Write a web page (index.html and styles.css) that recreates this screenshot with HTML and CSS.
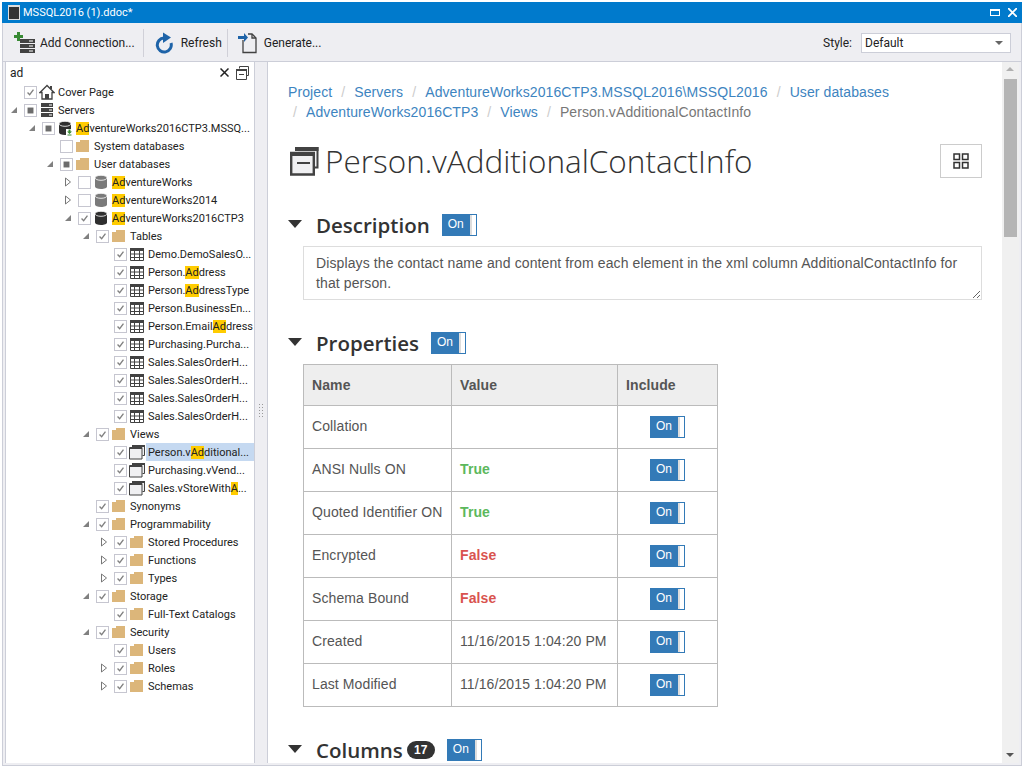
FILE: index.html
```html
<!DOCTYPE html>
<html>
  <head>
    <title>MSSQL2016 (1).ddoc*</title>
    <link rel="stylesheet" href="styles.css">
  </head>
  <body>
    <svg class="defs" width="0" height="0">
      <symbol id="cb-check" viewBox="0 0 13 13"><path d="M3 6.500 5.500 9 10 3.200" fill="none" stroke="#808080" stroke-width="1.600"/></symbol>
      <symbol id="cb-part" viewBox="0 0 13 13"><rect x="3" y="3" width="7" height="7" fill="#6c6c6c"/></symbol>
      <symbol id="exp-open" viewBox="0 0 8 8"><path d="M7 1V7H1Z" fill="#808080"/></symbol>
      <symbol id="exp-closed" viewBox="0 0 8 10"><path d="M1.500 1 6.500 5 1.500 9Z" fill="#fff" stroke="#777"/></symbol>
      <symbol id="folder" viewBox="0 0 16 16"><path d="M1 4h4V2h9v12H1Z" fill="#dcb67a"/></symbol>
      <symbol id="table" viewBox="0 0 16 16"><path d="M1.500 2.500h13v12h-13Z" fill="#fff" stroke="#424242"/><path d="M1 2h14v3H1Z" fill="#424242"/><path d="M1 8h14M1 11.500h14M5.500 5v10M10.500 5v10" stroke="#424242" fill="none"/></symbol>
      <symbol id="view" viewBox="0 0 16 16"><path d="M3.500 1.500h12v10h-2" fill="#f0f0f2" stroke="#424242"/><path d="M3 1h13v2H3Z" fill="#424242"/><path d="M.5 3.500h12.500v11.500H.5Z" fill="#f0f0f2" stroke="#424242"/><path d="M1 3h12v2H1Z" fill="#424242"/></symbol>
      <symbol id="db" viewBox="0 0 16 16"><path d="M2 4v8.500c0 1.500 2.500 2.500 6 2.500s6-1 6-2.500V4Z"/><ellipse cx="8" cy="3.800" rx="6" ry="2.500" stroke="#fff" stroke-width=".8"/></symbol>
      <symbol id="db-server" viewBox="0 0 16 16"><path d="M2 4v8.500c0 1.500 2.500 2.500 6 2.500s6-1 6-2.500V4Z" fill="#2f2f2f"/><ellipse cx="8" cy="3.800" rx="6" ry="2.500" fill="#2f2f2f" stroke="#fff" stroke-width=".8"/><path d="M9 9h7v7H9Z" fill="#fff"/><path d="M11.500 9.500h2v2H15L12.500 14 10 11.500h1.500ZM10.500 14.500h4v1h-4Z" fill="#388a34"/></symbol>
      <symbol id="servers" viewBox="0 0 16 16"><path d="M2 1h12v4H2ZM2 6h12v4H2ZM2 11h12v4H2Z" fill="#424242"/><path d="M10 3h3M10 8h3M10 13h3" stroke="#fff"/></symbol>
      <symbol id="home" viewBox="0 0 16 16"><path d="M8 1.500 1 8.500h2v6.500h10V8.500h2Z" fill="#fff" stroke="#424242" stroke-width="1.300"/><path d="M6 10h4v5H6Z" fill="#424242"/><path d="M11 2h2v3h-2Z" fill="#424242"/></symbol>
    </svg>

    <div class="window">
      <header class="titlebar">
        <span class="doc-icon"></span>
        <span class="title-text">MSSQL2016 (1).ddoc*</span>
        <span class="win-max"></span>
        <svg class="win-close" width="9" height="9" viewBox="0 0 9 9"><path d="M0 0 9 9M9 0 0 9" stroke="#fff" stroke-width="1.800"/></svg>
      </header>

      <div class="toolbar">
        <button class="tool tool-add">
          <svg width="22" height="22" viewBox="0 0 22 22">
            <path d="M6 7h15v4H6ZM6 12h15v4H6ZM6 17h15v4H6Z" fill="#424242"/>
            <path d="M15 9h4M15 14h4M15 19h4" stroke="#fff"/>
            <path d="M3 0h3v3h3v3H6v3H3V6H0V3h3Z" fill="#388a34"/>
          </svg>
          Add Connection...
        </button>
        <span class="tool-sep"></span>
        <button class="tool tool-refresh">
          <svg width="20" height="22" viewBox="0 0 20 22">
            <path d="M9 6A7 7 0 1 0 16 11" fill="none" stroke="#1e63a8" stroke-width="3"/>
            <path d="M8 .5V11L16 5.500Z" fill="#1e63a8"/>
          </svg>
          Refresh
        </button>
        <span class="tool-sep sep-second"></span>
        <button class="tool tool-gen">
          <svg width="20" height="22" viewBox="0 0 20 22">
            <path d="M5 8v12.500h13V6l-4-4h-4" fill="none" stroke="#424242" stroke-width="1.300"/>
            <path d="M14 2v4h4" fill="none" stroke="#424242" stroke-width="1.300"/>
            <path d="M0 4h6V1l4 4.500L6 10V7H0Z" fill="#1e63a8"/>
          </svg>
          Generate...
        </button>
        <span class="style-label">Style:</span>
        <div class="style-select">Default<span class="caret"></span></div>
      </div>

      <div class="main">
        <aside class="tree-panel">
          <div class="search">
            <span class="search-text">ad</span>
            <svg class="search-x" width="9" height="9" viewBox="0 0 9 9"><path d="M.5.500l8 8M8.500.500l-8 8" stroke="#222" stroke-width="1.500"/></svg>
            <svg width="13" height="14" viewBox="0 0 13 14"><path d="M3.500 2.500V.500h9v9h-2" fill="none" stroke="#424242"/><path d="M.5 3.500h10v10H.5Z" fill="#fff" stroke="#424242"/><path d="M0 3h11v2H0ZM3 8h5v1H3Z" fill="#424242"/></svg>
          </div>
          <div class="tree">
            <div class="row"><span class="exp"></span><span class="cb"><svg><use href="#cb-check"/></svg></span><svg class="ico"><use href="#home"/></svg><span class="label">Cover Page</span></div>
            <div class="row"><span class="exp"><svg class="open"><use href="#exp-open"/></svg></span><span class="cb"><svg><use href="#cb-part"/></svg></span><svg class="ico"><use href="#servers"/></svg><span class="label">Servers</span></div>
            <div class="row l1"><span class="exp"><svg class="open"><use href="#exp-open"/></svg></span><span class="cb"><svg><use href="#cb-part"/></svg></span><svg class="ico"><use href="#db-server"/></svg><span class="label"><mark>Ad</mark>ventureWorks2016CTP3.MSSQ...</span></div>
            <div class="row l2"><span class="exp"></span><span class="cb"></span><svg class="ico"><use href="#folder"/></svg><span class="label">System databases</span></div>
            <div class="row l2"><span class="exp"><svg class="open"><use href="#exp-open"/></svg></span><span class="cb"><svg><use href="#cb-part"/></svg></span><svg class="ico"><use href="#folder"/></svg><span class="label">User databases</span></div>
            <div class="row l3"><span class="exp"><svg class="closed"><use href="#exp-closed"/></svg></span><span class="cb"></span><svg class="ico db-gray"><use href="#db"/></svg><span class="label"><mark>Ad</mark>ventureWorks</span></div>
            <div class="row l3"><span class="exp"><svg class="closed"><use href="#exp-closed"/></svg></span><span class="cb"></span><svg class="ico db-gray"><use href="#db"/></svg><span class="label"><mark>Ad</mark>ventureWorks2014</span></div>
            <div class="row l3"><span class="exp"><svg class="open"><use href="#exp-open"/></svg></span><span class="cb"><svg><use href="#cb-check"/></svg></span><svg class="ico db-dark"><use href="#db"/></svg><span class="label"><mark>Ad</mark>ventureWorks2016CTP3</span></div>
            <div class="row l4"><span class="exp"><svg class="open"><use href="#exp-open"/></svg></span><span class="cb"><svg><use href="#cb-check"/></svg></span><svg class="ico"><use href="#folder"/></svg><span class="label">Tables</span></div>
            <div class="row l5"><span class="exp"></span><span class="cb"><svg><use href="#cb-check"/></svg></span><svg class="ico"><use href="#table"/></svg><span class="label">Demo.DemoSalesO...</span></div>
            <div class="row l5"><span class="exp"></span><span class="cb"><svg><use href="#cb-check"/></svg></span><svg class="ico"><use href="#table"/></svg><span class="label">Person.<mark>Ad</mark>dress</span></div>
            <div class="row l5"><span class="exp"></span><span class="cb"><svg><use href="#cb-check"/></svg></span><svg class="ico"><use href="#table"/></svg><span class="label">Person.<mark>Ad</mark>dressType</span></div>
            <div class="row l5"><span class="exp"></span><span class="cb"><svg><use href="#cb-check"/></svg></span><svg class="ico"><use href="#table"/></svg><span class="label">Person.BusinessEn...</span></div>
            <div class="row l5"><span class="exp"></span><span class="cb"><svg><use href="#cb-check"/></svg></span><svg class="ico"><use href="#table"/></svg><span class="label">Person.Email<mark>Ad</mark>dress</span></div>
            <div class="row l5"><span class="exp"></span><span class="cb"><svg><use href="#cb-check"/></svg></span><svg class="ico"><use href="#table"/></svg><span class="label">Purchasing.Purcha...</span></div>
            <div class="row l5"><span class="exp"></span><span class="cb"><svg><use href="#cb-check"/></svg></span><svg class="ico"><use href="#table"/></svg><span class="label">Sales.SalesOrderH...</span></div>
            <div class="row l5"><span class="exp"></span><span class="cb"><svg><use href="#cb-check"/></svg></span><svg class="ico"><use href="#table"/></svg><span class="label">Sales.SalesOrderH...</span></div>
            <div class="row l5"><span class="exp"></span><span class="cb"><svg><use href="#cb-check"/></svg></span><svg class="ico"><use href="#table"/></svg><span class="label">Sales.SalesOrderH...</span></div>
            <div class="row l5"><span class="exp"></span><span class="cb"><svg><use href="#cb-check"/></svg></span><svg class="ico"><use href="#table"/></svg><span class="label">Sales.SalesOrderH...</span></div>
            <div class="row l4"><span class="exp"><svg class="open"><use href="#exp-open"/></svg></span><span class="cb"><svg><use href="#cb-check"/></svg></span><svg class="ico"><use href="#folder"/></svg><span class="label">Views</span></div>
            <div class="row l5"><span class="exp"></span><span class="cb"><svg><use href="#cb-check"/></svg></span><svg class="ico"><use href="#view"/></svg><span class="label selected">Person.v<mark>Ad</mark>ditional...</span></div>
            <div class="row l5"><span class="exp"></span><span class="cb"><svg><use href="#cb-check"/></svg></span><svg class="ico"><use href="#view"/></svg><span class="label">Purchasing.vVend...</span></div>
            <div class="row l5"><span class="exp"></span><span class="cb"><svg><use href="#cb-check"/></svg></span><svg class="ico"><use href="#view"/></svg><span class="label">Sales.vStoreWith<mark>A</mark>...</span></div>
            <div class="row l4"><span class="exp"></span><span class="cb"><svg><use href="#cb-check"/></svg></span><svg class="ico"><use href="#folder"/></svg><span class="label">Synonyms</span></div>
            <div class="row l4"><span class="exp"><svg class="open"><use href="#exp-open"/></svg></span><span class="cb"><svg><use href="#cb-check"/></svg></span><svg class="ico"><use href="#folder"/></svg><span class="label">Programmability</span></div>
            <div class="row l5"><span class="exp"><svg class="closed"><use href="#exp-closed"/></svg></span><span class="cb"><svg><use href="#cb-check"/></svg></span><svg class="ico"><use href="#folder"/></svg><span class="label">Stored Procedures</span></div>
            <div class="row l5"><span class="exp"><svg class="closed"><use href="#exp-closed"/></svg></span><span class="cb"><svg><use href="#cb-check"/></svg></span><svg class="ico"><use href="#folder"/></svg><span class="label">Functions</span></div>
            <div class="row l5"><span class="exp"><svg class="closed"><use href="#exp-closed"/></svg></span><span class="cb"><svg><use href="#cb-check"/></svg></span><svg class="ico"><use href="#folder"/></svg><span class="label">Types</span></div>
            <div class="row l4"><span class="exp"><svg class="open"><use href="#exp-open"/></svg></span><span class="cb"><svg><use href="#cb-check"/></svg></span><svg class="ico"><use href="#folder"/></svg><span class="label">Storage</span></div>
            <div class="row l5"><span class="exp"></span><span class="cb"><svg><use href="#cb-check"/></svg></span><svg class="ico"><use href="#folder"/></svg><span class="label">Full-Text Catalogs</span></div>
            <div class="row l4"><span class="exp"><svg class="open"><use href="#exp-open"/></svg></span><span class="cb"><svg><use href="#cb-check"/></svg></span><svg class="ico"><use href="#folder"/></svg><span class="label">Security</span></div>
            <div class="row l5"><span class="exp"></span><span class="cb"><svg><use href="#cb-check"/></svg></span><svg class="ico"><use href="#folder"/></svg><span class="label">Users</span></div>
            <div class="row l5"><span class="exp"><svg class="closed"><use href="#exp-closed"/></svg></span><span class="cb"><svg><use href="#cb-check"/></svg></span><svg class="ico"><use href="#folder"/></svg><span class="label">Roles</span></div>
            <div class="row l5"><span class="exp"><svg class="closed"><use href="#exp-closed"/></svg></span><span class="cb"><svg><use href="#cb-check"/></svg></span><svg class="ico"><use href="#folder"/></svg><span class="label">Schemas</span></div>
          </div>
        </aside>

        <div class="splitter"><span class="grip"></span></div>

        <div class="doc-panel">
          <div class="doc">
            <ul class="breadcrumb">
              <li><a>Project</a></li>
              <li><a>Servers</a></li>
              <li><a>AdventureWorks2016CTP3.MSSQL2016\MSSQL2016</a></li>
              <li><a>User databases</a></li>
              <li><a>AdventureWorks2016CTP3</a></li>
              <li><a>Views</a></li>
              <li class="current">Person.vAdditionalContactInfo</li>
            </ul>

            <div class="page-title">
              <svg class="title-icon" width="30" height="30" viewBox="0 0 30 30">
                <path d="M6 2h22.500v19.500H24" fill="#f0f0f2" stroke="#424242" stroke-width="2"/>
                <path d="M6 1h23.500v4H6Z" fill="#424242"/>
                <path d="M2.200 7h22.600v21.500H2.200Z" fill="#f0f0f2" stroke="#424242" stroke-width="2.400"/>
                <path d="M2 6h23v4H2ZM8 16h13v2H8Z" fill="#424242"/>
              </svg>
              <h1>Person.vAdditionalContactInfo</h1>
              <button class="grid-btn">
                <svg width="16" height="16" viewBox="0 0 16 16"><path d="M1 1h5.500v5.500H1ZM9.500 1H15v5.500H9.500ZM1 9.500h5.500V15H1ZM9.500 9.500H15V15H9.500Z" fill="#fff" stroke="#333" stroke-width="1.500"/></svg>
              </button>
            </div>

            <div class="section-head head-desc">
              <span class="tri"></span>
              <h2>Description</h2>
              <span class="toggle">On</span>
            </div>
            <textarea class="desc" readonly>Displays the contact name and content from each element in the xml column AdditionalContactInfo for that person.</textarea>

            <div class="section-head head-props">
              <span class="tri"></span>
              <h2>Properties</h2>
              <span class="toggle">On</span>
            </div>
            <table class="props">
              <tr><th class="c-name">Name</th><th class="c-value">Value</th><th class="c-inc">Include</th></tr>
              <tr><td>Collation</td><td></td><td class="inc"><span class="toggle">On</span></td></tr>
              <tr><td>ANSI Nulls ON</td><td class="yes">True</td><td class="inc"><span class="toggle">On</span></td></tr>
              <tr><td>Quoted Identifier ON</td><td class="yes">True</td><td class="inc"><span class="toggle">On</span></td></tr>
              <tr><td>Encrypted</td><td class="no">False</td><td class="inc"><span class="toggle">On</span></td></tr>
              <tr><td>Schema Bound</td><td class="no">False</td><td class="inc"><span class="toggle">On</span></td></tr>
              <tr><td>Created</td><td>11/16/2015 1:04:20 PM</td><td class="inc"><span class="toggle">On</span></td></tr>
              <tr><td>Last Modified</td><td>11/16/2015 1:04:20 PM</td><td class="inc"><span class="toggle">On</span></td></tr>
            </table>

            <div class="section-head head-cols">
              <span class="tri"></span>
              <h2>Columns</h2>
              <span class="badge">17</span>
              <span class="toggle">On</span>
            </div>
          </div>
          <div class="scrollbar">
            <span class="sb-up"></span>
            <span class="sb-thumb"></span>
            <span class="sb-down"></span>
          </div>
        </div>
      </div>
    </div>
  </body>
</html>
```

FILE: styles.css
```css
* { box-sizing: border-box; }
html, body { margin: 0; height: 100%; overflow: hidden; background: #fff; }
body { padding: 2px; font-family: Roboto, sans-serif; }
.defs { position: absolute; }

.window {
  width: 1020px;
  height: 764px;
  display: flex;
  flex-direction: column;
  background: #eeeef2;
  border: 1px solid #ccced8;
  border-top: 0;
}

/* title bar */
.titlebar {
  height: 21px;
  margin: 0 -1px;
  flex: none;
  display: flex;
  align-items: center;
  padding: 0 5px 0 6px;
  background: #007acc;
  color: #fff;
  font-size: 11px;
}
.doc-icon {
  width: 12px;
  height: 15px;
  background: #333;
  border: 1px solid #ddd;
  border-top-width: 2px;
  margin-right: 3px;
}
.title-text { flex: 1; }
.win-max {
  width: 10px;
  height: 7px;
  border: 1px solid #fff;
  border-top-width: 2px;
  margin-right: 8px;
}

/* toolbar */
.toolbar {
  height: 39px;
  flex: none;
  display: flex;
  align-items: center;
  padding: 1px 0 0 11px;
  border-bottom: 1px solid #ccced8;
  font-size: 12px;
  color: #222;
}
.tool {
  display: flex;
  align-items: center;
  gap: 4px;
  border: 0;
  padding: 0;
  background: none;
  font: inherit;
  color: inherit;
}
.tool-refresh { gap: 6px; }
.tool-gen { gap: 6px; }
.tool-sep {
  width: 1px;
  height: 28px;
  background: #d0d0d8;
  margin: 0 11px 0 8px;
}
.sep-second { margin: 0 10px 0 5px; }
.style-label { margin-left: auto; margin-right: 9px; }
.style-select {
  position: relative;
  width: 150px;
  height: 20px;
  margin-right: 10px;
  padding: 2px 3px;
  background: #fff;
  border: 1px solid #ccced8;
}
.caret {
  position: absolute;
  right: 7px;
  top: 7px;
  border: 4px solid transparent;
  border-top: 4px solid #666;
  border-bottom: 0;
}

.main { flex: 1; display: flex; min-height: 0; padding-left: 2px; }

/* tree */
.tree-panel {
  width: 250px;
  height: 701px;
  flex: none;
  background: #fff;
  border-right: 1px solid #ccced8;
  border-left: 1px solid #ccced8;
  font-size: 11px;
  color: #222;
}
.search {
  height: 21px;
  display: flex;
  align-items: center;
  padding: 0 5px 0 4px;
}
.search-text { flex: 1; font-size: 12px; }
.search-x { margin-right: 7px; }

.row { height: 18px; display: flex; align-items: center; padding-left: 1px; white-space: nowrap; }
.l1 { padding-left: 19px; }
.l2 { padding-left: 37px; }
.l3 { padding-left: 55px; }
.l4 { padding-left: 73px; }
.l5 { padding-left: 91px; }
.exp {
  width: 13px;
  height: 18px;
  margin-right: 4px;
  display: flex;
  align-items: center;
  justify-content: center;
  flex: none;
}
.exp .open { width: 8px; height: 8px; }
.exp .closed { width: 8px; height: 10px; }
.cb {
  width: 13px;
  height: 13px;
  flex: none;
  margin-right: 2px;
  background: #fff;
  border: 1px solid #c6c6d0;
  display: block;
}
.cb svg { display: block; width: 11px; height: 11px; }
.ico { width: 16px; height: 16px; flex: none; margin-right: 3px; }
.db-dark { color: #2f2f2f; fill: #2f2f2f; }
.db-gray { color: #7a7a7a; fill: #7a7a7a; }
.label { flex: 1; min-width: 0; height: 18px; line-height: 20px; }
.selected { background: #c5d9f1; margin-left: -2px; padding-left: 2px; }
mark { background: #ffcc00; color: inherit; }

.splitter {
  width: 12px;
  flex: none;
  display: flex;
  align-items: center;
  justify-content: center;
  padding-bottom: 6px;
}
.grip {
  width: 6px;
  height: 16px;
  background: radial-gradient(circle, #999 0.6px, transparent 1px) 0 0 / 3px 3px;
}

/* document */
.doc-panel {
  flex: 1;
  height: 701px;
  margin-right: 2px;
  display: flex;
  background: #fff;
  border-left: 1px solid #ccced8;
  min-width: 0;
}
.doc {
  flex: 1;
  min-width: 0;
  overflow: hidden;
  padding: 20px 20px 0 20px;
  font-family: "Liberation Sans", sans-serif;
  font-size: 14px;
  letter-spacing: 0.1px;
  color: #555;
}
.breadcrumb { list-style: none; margin: 0; padding: 0; line-height: 20px; }
.breadcrumb li { display: inline-block; }
.breadcrumb li + li::before { content: "/\00a0"; padding: 0 5px; color: #ccc; }
.breadcrumb a { color: #3d84c0; }
.breadcrumb .current { color: #777; }

.page-title { display: flex; align-items: center; margin-top: 17px; height: 44px; }
.title-icon { margin-left: 1px; margin-right: 6px; }
.page-title h1 {
  flex: 1;
  margin: 0;
  padding-bottom: 2px;
  font-family: "Open Sans", sans-serif;
  font-size: 31.500px;
  font-weight: 300;
  letter-spacing: 0;
  color: #333;
}
.grid-btn {
  width: 42px;
  height: 34px;
  background: #fff;
  border: 1px solid #ccc;
  padding: 0;
  display: flex;
  align-items: center;
  justify-content: center;
}

.section-head { display: flex; align-items: center; height: 24px; }
.head-desc { margin-top: 30px; }
.head-props { margin-top: 31px; }
.head-cols { margin-top: 31px; }
.section-head h2 {
  margin: 0 12px 0 14px;
  font-family: "Open Sans", sans-serif;
  font-size: 20.500px;
  font-weight: 600;
  letter-spacing: 0;
  color: #333;
}
.tri {
  width: 0;
  height: 0;
  border: 7.500px solid transparent;
  border-top: 8px solid #333;
  border-bottom: 0;
  margin-top: -3px;
}
.toggle {
  display: inline-block;
  width: 35px;
  height: 22px;
  padding-left: 5px;
  background: linear-gradient(to right, #337ab7 27px, #ddd 27px, #ddd 29px, #fff 29px);
  border: 1px solid #337ab7;
  color: #fff;
  font-size: 12px;
  letter-spacing: 0;
  line-height: 19px;
}
.badge {
  margin: 0 12px 0 -8px;
  width: 28px;
  height: 18px;
  border-radius: 9px;
  background: #333;
  color: #fff;
  font-size: 12px;
  font-weight: bold;
  line-height: 18px;
  text-align: center;
}

.desc {
  display: block;
  width: 679px;
  height: 54px;
  margin: 9px 0 0 15px;
  padding: 6px 12px;
  border: 1.500px solid #ddd;
  font: inherit;
  line-height: 20px;
  color: #555;
  letter-spacing: 0.11px;
  outline: none;
}

.props {
  margin: 9px 0 0 15px;
  width: 415px;
  border-collapse: collapse;
  table-layout: fixed;
}
.props th, .props td {
  height: 43px;
  padding: 0 8px 2px;
  border: 1px solid #bbb;
  text-align: left;
  white-space: nowrap;
}
.props th { height: 41px; padding-bottom: 0; background: #eee; }
.c-name { width: 148px; }
.c-value { width: 166px; }
.yes { color: #5cb85c; font-weight: bold; }
.no { color: #d9534f; font-weight: bold; }
.props .inc { padding: 0 0 0 32px; }
.inc .toggle { vertical-align: middle; }

/* scrollbar */
.scrollbar {
  position: relative;
  width: 17px;
  flex: none;
  background: #f0f0f0;
}
.sb-up, .sb-down { position: absolute; left: 4px; border: 4px solid transparent; }
.sb-up { top: 5px; border-bottom: 4px solid #b0b0b0; border-top: 0; }
.sb-down { bottom: 6px; border-top: 4px solid #555; border-bottom: 0; }
.sb-thumb {
  position: absolute;
  left: 2px;
  top: 17px;
  width: 13px;
  height: 158px;
  background: #b5b5b5;
}
```
